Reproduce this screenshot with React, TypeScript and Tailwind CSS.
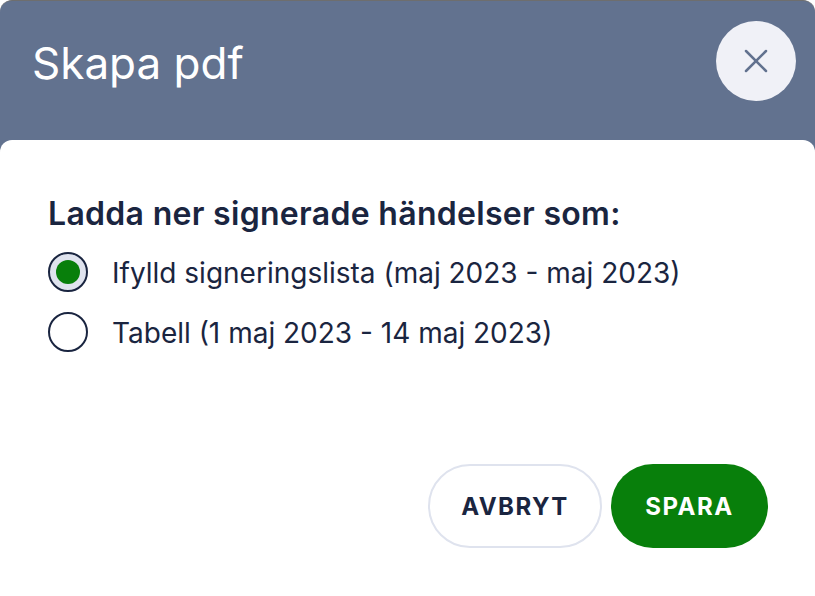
import { X } from "lucide-react";

function Radio({ checked, label }: { checked?: boolean; label: string }) {
  return (
    <label className="flex items-center gap-[24px] h-[40px]">
      <span
        className={
          "flex items-center justify-center w-[40px] h-[40px] rounded-full border-[2px] border-[#1a2540] " +
          (checked ? "bg-[#dfe3ee]" : "bg-white")
        }
      >
        {checked && <span className="block w-[24px] h-[24px] rounded-full bg-[#087f0b]" />}
      </span>
      <span className="pt-[2px] text-[28px] leading-[42px] text-[#1a2540]">{label}</span>
    </label>
  );
}

export default function App() {
  return (
    <div className="w-[815px] h-[596px] bg-white overflow-hidden font-['Inter',sans-serif]">
      <div className="flex flex-col h-full bg-[#62728f] rounded-t-[12px] border-t border-[#6e6e6e]">
        <div className="flex items-start justify-between h-[139px] pl-[32px] pr-[19px] pt-[20px]">
          <h1 className="text-[44px] leading-[84px] text-white">Skapa pdf</h1>
          <button className="flex items-center justify-center w-[80px] h-[80px] rounded-full bg-[#f0f1f7] text-[#62728f]">
            <X size={40} strokeWidth={1.5} />
          </button>
        </div>
        <div className="flex-1 bg-white rounded-t-[12px] pl-[48px] pr-[47px] pt-[54px]">
          <h2 className="text-[32px] leading-[40px] font-semibold tracking-[0.3px] text-[#1a2540] mb-[18px]">
            Ladda ner signerade händelser som:
          </h2>
          <div className="flex flex-col gap-[20px]">
            <Radio checked label="Ifylld signeringslista (maj 2023 - maj 2023)" />
            <Radio label="Tabell (1 maj 2023 - 14 maj 2023)" />
          </div>
          <div className="flex justify-end gap-[9px] mt-[112px]">
            <button className="w-[174px] h-[84px] pt-[2px] rounded-full border-[2px] border-[#dfe3ee] bg-white text-[24px] font-bold tracking-[1.5px] text-[#1a2540]">
              AVBRYT
            </button>
            <button className="w-[157px] h-[84px] pt-[2px] rounded-full bg-[#087f0b] text-[24px] font-bold tracking-[1.5px] text-white">
              SPARA
            </button>
          </div>
        </div>
      </div>
    </div>
  );
}
